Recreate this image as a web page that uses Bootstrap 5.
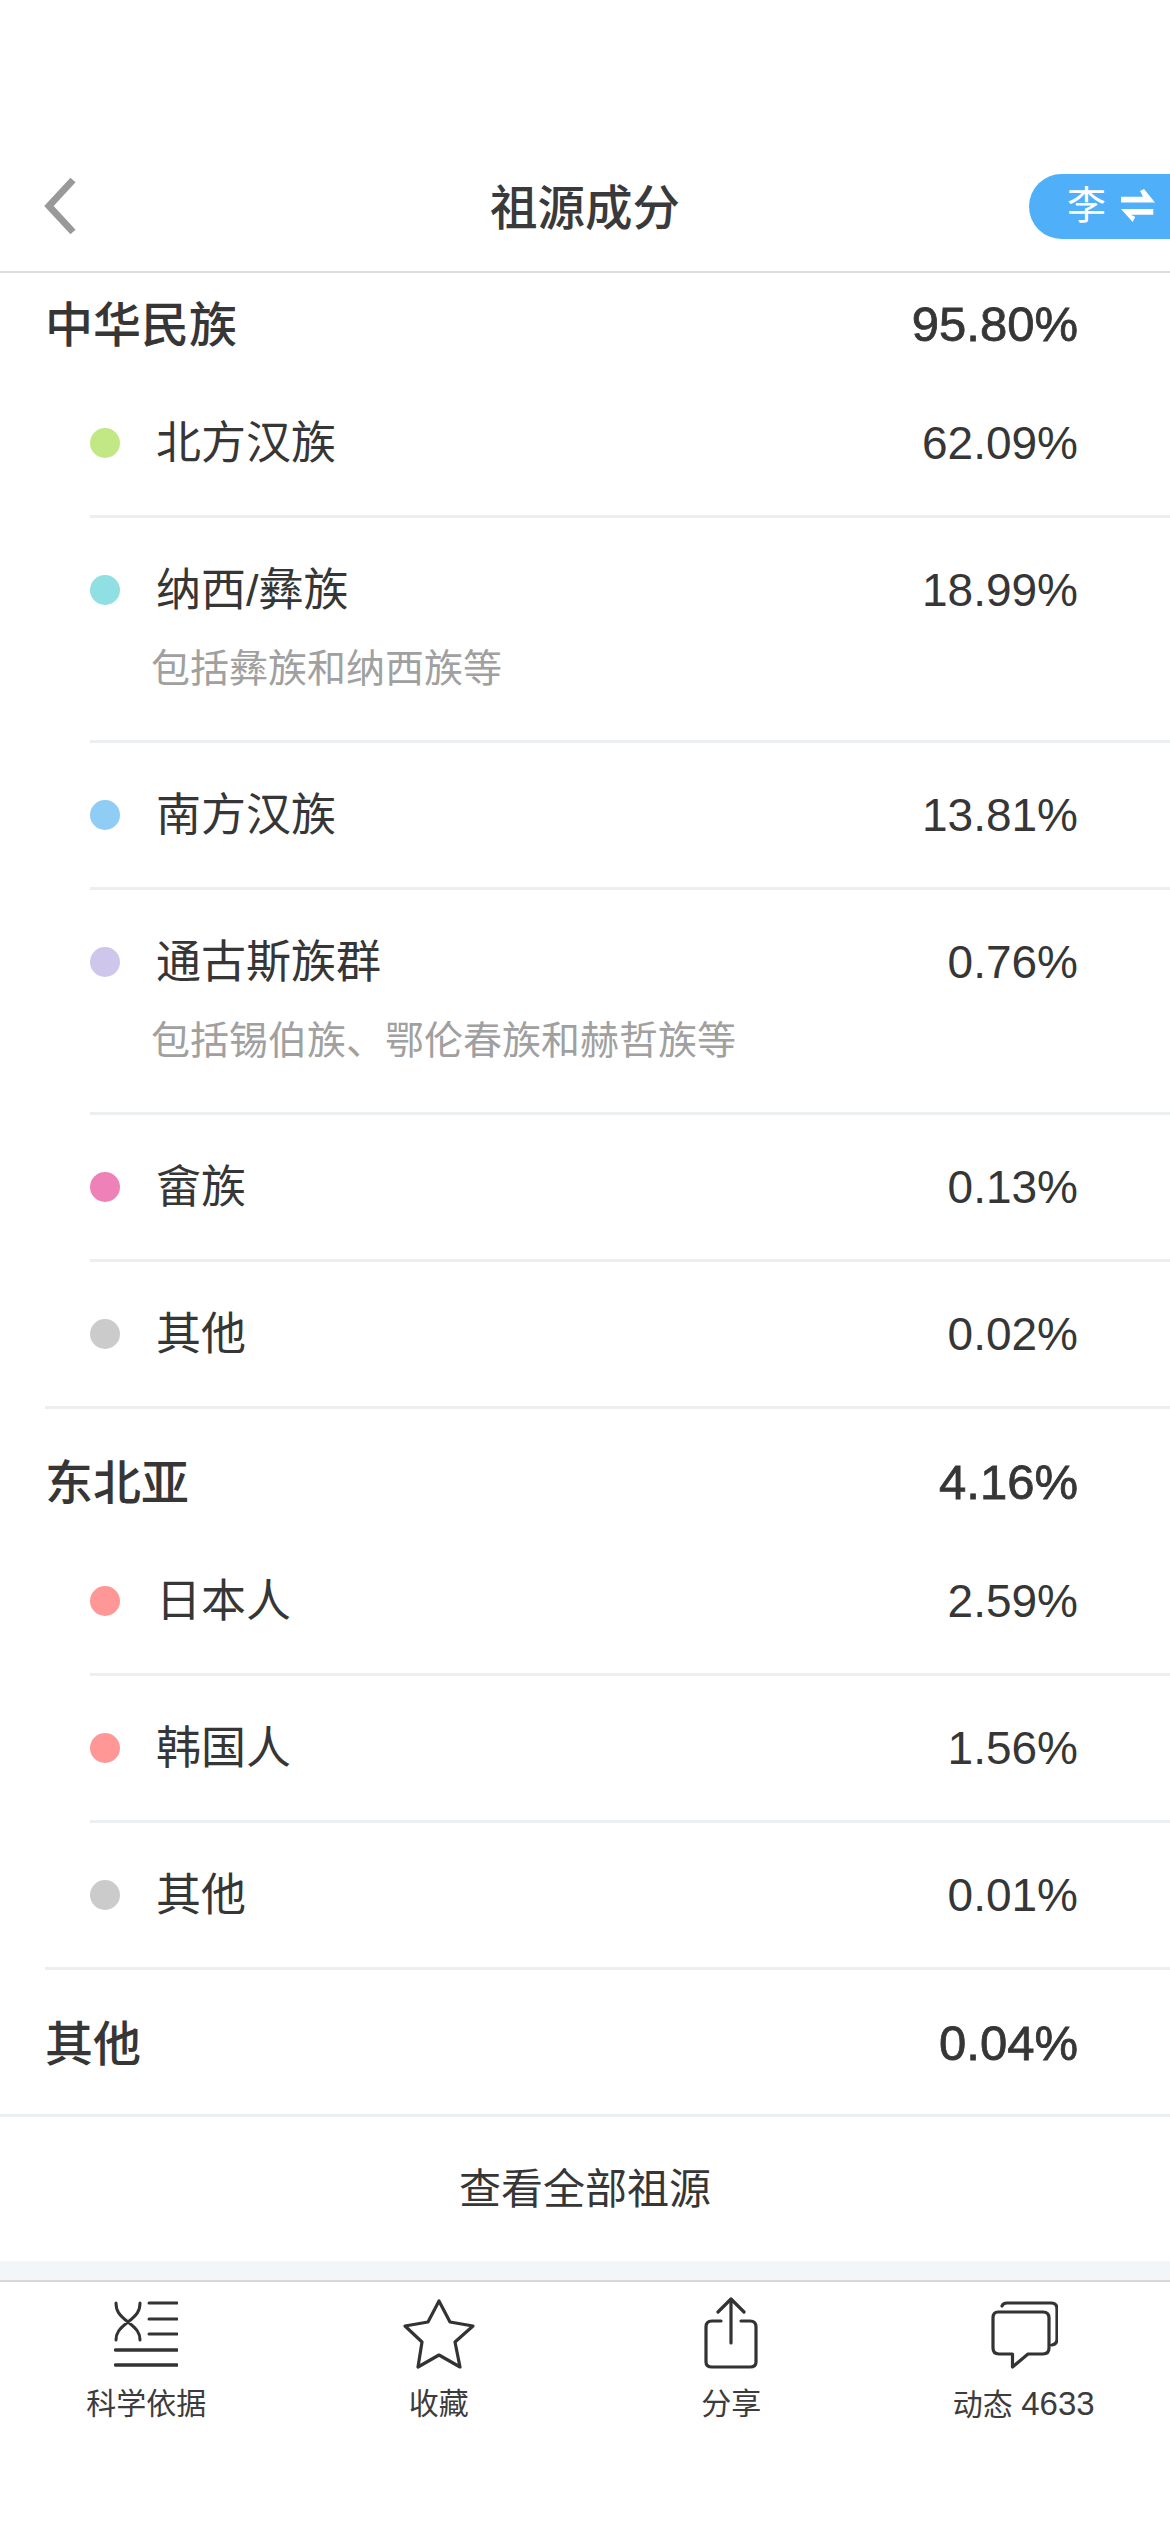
<!DOCTYPE html>
<html lang="zh-CN">
<head>
<meta charset="utf-8">
<meta name="viewport" content="width=device-width, initial-scale=1">
<title>祖源成分</title>
<link href="https://cdn.jsdelivr.net/npm/bootstrap@5.3.0/dist/css/bootstrap.min.css" rel="stylesheet">
<style>
body{background:#fff;color:#363636;font-family:"Liberation Sans","Noto Sans CJK SC",sans-serif;}
.app-head{padding-top:174px;padding-bottom:33px;border-bottom:2px solid #dcdcdc;height:273px;}
.head-side{width:141px;height:65px;flex:none;}
.head-title{font-size:47.5px;font-weight:500;line-height:65px;height:65px;padding-top:2px;color:#3a3a3a;}
.back-ico{width:40px;height:64px;margin-left:40px;}
.person-pill{background:#4fb0f9;color:#fff;border-radius:33px 0 0 33px;font-size:39px;padding-left:38px;gap:15px;}
.sect{margin-left:45px;border-bottom:3px solid #eceff2;padding-top:50px;}
.sect-first{padding-top:28px;}
.sect-last{border-bottom:0;padding-bottom:48px;}
.sect-head{font-size:48px;font-weight:500;line-height:46px;height:46px;padding-right:92px;margin-bottom:24px;}
.sect-name{padding-top:2px;}
.sect-last .sect-head{margin-bottom:0;}
.sect-pct{font-size:49px;font-weight:400;-webkit-text-stroke:.8px #363636;}
.ethnic-list{margin-left:45px;}
.ethnic-item{padding:49px 92px 49px 0;border-bottom:3px solid #eceff2;}
.ethnic-item:last-child{border-bottom:0;}
.ethnic-main{font-size:45px;line-height:46px;height:46px;}
.ethnic-dot{width:30px;height:30px;border-radius:50%;flex:none;margin-right:37px;}
.ethnic-name{padding-top:2px;margin-left:-1px;}
.ethnic-note{font-size:39px;line-height:44px;color:#a0a0a0;margin-left:61px;margin-top:34px;}
.pct-val{font-size:46px;}
.all-link{height:147px;border-top:3px solid #eceff2;font-size:42px;color:#363636;}
.band{height:21px;background:#f3f6f9;border-bottom:2px solid #d8d8d8;}
.tabbar{padding-top:15px;}
.tab-ico{height:72px;}
.tab-text{font-size:30px;line-height:40px;margin-top:15px;color:#3c3c3c;}
.tab-num{font-size:33px;}
</style>
</head>
<body>
<header class="app-head d-flex align-items-center">
  <div class="head-side d-flex align-items-center">
    <svg class="back-ico" viewBox="0 0 40 64" fill="none" stroke="#999" stroke-width="7"><path d="M33 6 9 32 33 58"/></svg>
  </div>
  <div class="head-title flex-grow-1 text-center">祖源成分</div>
  <div class="head-side person-pill d-flex align-items-center">
    <span>李</span>
    <svg width="35" height="34" viewBox="0 0 35 34" fill="#fff"><path d="M0 7.7H22L19 2 23 0 34 13.4H0ZM32.3 20H0L11.7 33 14.3 28 10 25.7H32.3Z"/></svg>
  </div>
</header>

<section class="sect sect-first">
  <div class="sect-head d-flex justify-content-between"><span class="sect-name">中华民族</span><span class="sect-pct">95.80%</span></div>
  <div class="ethnic-list">
    <div class="ethnic-item"><div class="ethnic-main d-flex align-items-center"><i class="ethnic-dot" style="background:#c1e884"></i><span class="ethnic-name flex-grow-1">北方汉族</span><span class="pct-val">62.09%</span></div></div>
    <div class="ethnic-item"><div class="ethnic-main d-flex align-items-center"><i class="ethnic-dot" style="background:#8fdfe3"></i><span class="ethnic-name flex-grow-1">纳西/彝族</span><span class="pct-val">18.99%</span></div><div class="ethnic-note">包括彝族和纳西族等</div></div>
    <div class="ethnic-item"><div class="ethnic-main d-flex align-items-center"><i class="ethnic-dot" style="background:#8fcdf4"></i><span class="ethnic-name flex-grow-1">南方汉族</span><span class="pct-val">13.81%</span></div></div>
    <div class="ethnic-item"><div class="ethnic-main d-flex align-items-center"><i class="ethnic-dot" style="background:#cfc6ec"></i><span class="ethnic-name flex-grow-1">通古斯族群</span><span class="pct-val">0.76%</span></div><div class="ethnic-note">包括锡伯族、鄂伦春族和赫哲族等</div></div>
    <div class="ethnic-item"><div class="ethnic-main d-flex align-items-center"><i class="ethnic-dot" style="background:#ee82b8"></i><span class="ethnic-name flex-grow-1">畲族</span><span class="pct-val">0.13%</span></div></div>
    <div class="ethnic-item"><div class="ethnic-main d-flex align-items-center"><i class="ethnic-dot" style="background:#cbcbcb"></i><span class="ethnic-name flex-grow-1">其他</span><span class="pct-val">0.02%</span></div></div>
  </div>
</section>

<section class="sect">
  <div class="sect-head d-flex justify-content-between"><span class="sect-name">东北亚</span><span class="sect-pct">4.16%</span></div>
  <div class="ethnic-list">
    <div class="ethnic-item"><div class="ethnic-main d-flex align-items-center"><i class="ethnic-dot" style="background:#ff9796"></i><span class="ethnic-name flex-grow-1">日本人</span><span class="pct-val">2.59%</span></div></div>
    <div class="ethnic-item"><div class="ethnic-main d-flex align-items-center"><i class="ethnic-dot" style="background:#ff9796"></i><span class="ethnic-name flex-grow-1">韩国人</span><span class="pct-val">1.56%</span></div></div>
    <div class="ethnic-item"><div class="ethnic-main d-flex align-items-center"><i class="ethnic-dot" style="background:#cbcbcb"></i><span class="ethnic-name flex-grow-1">其他</span><span class="pct-val">0.01%</span></div></div>
  </div>
</section>

<section class="sect sect-last">
  <div class="sect-head d-flex justify-content-between"><span class="sect-name">其他</span><span class="sect-pct">0.04%</span></div>
</section>

<a href="#" class="all-link d-flex align-items-center justify-content-center text-decoration-none">查看全部祖源</a>
<div class="band"></div>

<nav class="tabbar row g-0 text-center">
  <div class="col-3 d-flex flex-column align-items-center">
    <svg class="tab-ico" width="64" viewBox="0 0 64 72" fill="none" stroke="#333" stroke-width="3" stroke-linecap="round"><path d="M2 6C2 14 5 18 14 25 23 32 26 36 26 43M26 6C26 14 23 18 14 25 5 32 2 36 2 43M35 6H63M35 22H63M35 37H63"/><path d="M1.5 53H63M1.5 68H63" stroke-width="3.4"/></svg>
    <div class="tab-text">科学依据</div>
  </div>
  <div class="col-3 d-flex flex-column align-items-center">
    <svg class="tab-ico" width="74" viewBox="0 0 74 72" fill="none" stroke="#333" stroke-width="3.2" stroke-linejoin="round"><path d="M37 4 48 25 71 29 53 45 58 70 37 58 16 70 20 45 3 29 26 25Z"/></svg>
    <div class="tab-text">收藏</div>
  </div>
  <div class="col-3 d-flex flex-column align-items-center">
    <svg class="tab-ico" width="54" viewBox="0 0 54 72" fill="none" stroke="#333" stroke-width="3.2" stroke-linecap="round" stroke-linejoin="round"><path d="M27 2V46M14 15 27 2 40 15M17 24H8Q2 24 2 30V65Q2 70 8 70H46Q52 70 52 65V30Q52 24 46 24H37"/></svg>
    <div class="tab-text">分享</div>
  </div>
  <div class="col-3 d-flex flex-column align-items-center">
    <svg class="tab-ico" width="68" viewBox="0 0 68 72" fill="none" stroke="#333" stroke-width="3.2" stroke-linecap="round" stroke-linejoin="round"><path d="M8 15H53Q59 15 59 21V51Q59 57 53 57H38L22.5 70V57H9Q3 57 3 51V21Q3 15 8 15ZM12 9Q13 6 17 6H61Q67 6 67 12V42Q67 47 62 48"/></svg>
    <div class="tab-text">动态 <span class="tab-num">4633</span></div>
  </div>
</nav>
<script src="https://cdn.jsdelivr.net/npm/bootstrap@5.3.0/dist/js/bootstrap.bundle.min.js"></script>
</body>
</html>
